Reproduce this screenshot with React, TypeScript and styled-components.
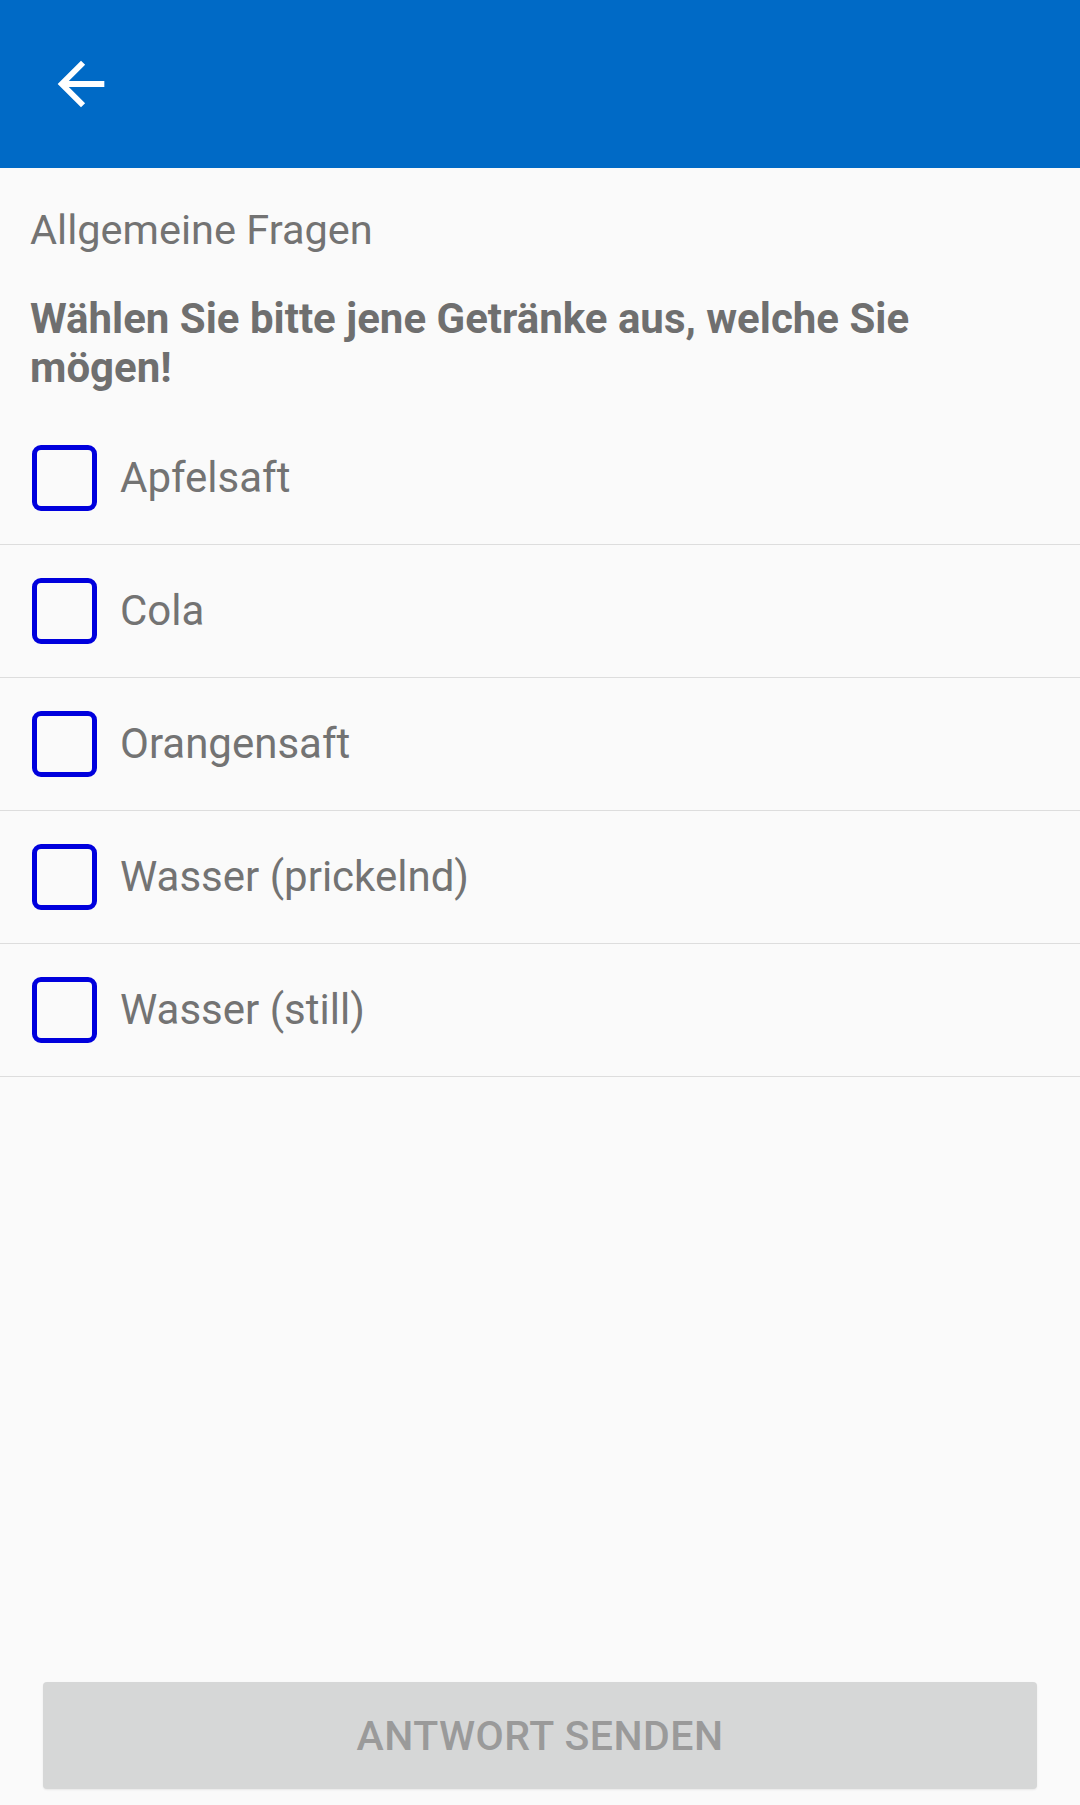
import React, { useState } from "react";
import styled, { createGlobalStyle } from "styled-components";

const GlobalStyle = createGlobalStyle`
  html, body { margin: 0; padding: 0; background: #fafafa; }
  body { font-family: Roboto, "Noto Sans", "Liberation Sans", sans-serif; }
  * { box-sizing: border-box; }
`;

const Screen = styled.div`
  min-height: 1805px;
  display: flex;
  flex-direction: column;
  background: #fafafa;
`;

const AppBar = styled.header`
  height: 168px;
  background: #006ac6;
  display: flex;
  align-items: center;
  padding-left: 46px;
  flex-shrink: 0;
`;

const BackButton = styled.button`
  width: 70px;
  height: 70px;
  padding: 0;
  border: none;
  background: transparent;
  display: flex;
  align-items: center;
  justify-content: center;
  cursor: pointer;
  svg { display: block; }
`;

const Content = styled.main`
  display: flex;
  flex-direction: column;
  padding-top: 36px;
  flex: 1;
`;

const Section = styled.div`
  padding: 0 80px 0 30px;
`;

const Category = styled.div`
  font-size: 41.5px;
  line-height: 52px;
  color: #737373;
  font-weight: 400;
`;

const Question = styled.h2`
  margin: 38px 0 0;
  font-size: 42px;
  line-height: 49px;
  font-weight: 700;
  color: #6f6f6f;
`;

const Options = styled.div`
  margin-top: 20px;
  display: flex;
  flex-direction: column;
`;

const OptionRow = styled.label`
  height: 133px;
  border-bottom: 1px solid #dddddd;
  display: flex;
  align-items: center;
  padding-left: 32px;
  gap: 23px;
  cursor: pointer;
`;

const Box = styled.span<{ $checked: boolean }>`
  width: 65px;
  height: 66px;
  border: 5.5px solid #0000dd;
  border-radius: 9px;
  background: ${(p) => (p.$checked ? "#0000dd" : "transparent")};
  flex-shrink: 0;
`;

const HiddenInput = styled.input`
  display: none;
`;

const OptionText = styled.span`
  font-size: 42px;
  line-height: 52px;
  color: #737373;
`;

const Footer = styled.div`
  margin-top: auto;
  padding: 0 43px 16px;
`;

const SubmitButton = styled.button`
  width: 100%;
  height: 107px;
  border: none;
  border-radius: 4px;
  background: #d6d7d7;
  color: #9a9a9a;
  font-family: Roboto, "Noto Sans", sans-serif;
  font-weight: 500;
  font-size: 41px;
  letter-spacing: 0.5px;
  text-transform: uppercase;
  box-shadow: 0 1px 2px rgba(0, 0, 0, 0.08);
`;

const drinks = ["Apfelsaft", "Cola", "Orangensaft", "Wasser (prickelnd)", "Wasser (still)"];

export default function App() {
  const [checked, setChecked] = useState<Record<string, boolean>>({});
  return (
    <>
      <GlobalStyle />
      <Screen>
        <AppBar>
          <BackButton aria-label="Zurück">
            <svg width="70" height="70" viewBox="0 0 24 24">
              <path fill="#ffffff" d="M20 11H7.83l5.59-5.59L12 4l-8 8 8 8 1.41-1.41L7.83 13H20v-2z" />
            </svg>
          </BackButton>
        </AppBar>
        <Content>
          <Section>
            <Category>Allgemeine Fragen</Category>
            <Question>Wählen Sie bitte jene Getränke aus, welche Sie mögen!</Question>
          </Section>
          <Options>
            {drinks.map((d) => (
              <OptionRow key={d}>
                <HiddenInput
                  type="checkbox"
                  checked={!!checked[d]}
                  onChange={() => setChecked((c) => ({ ...c, [d]: !c[d] }))}
                />
                <Box $checked={!!checked[d]} />
                <OptionText>{d}</OptionText>
              </OptionRow>
            ))}
          </Options>
          <Footer>
            <SubmitButton disabled>Antwort senden</SubmitButton>
          </Footer>
        </Content>
      </Screen>
    </>
  );
}
